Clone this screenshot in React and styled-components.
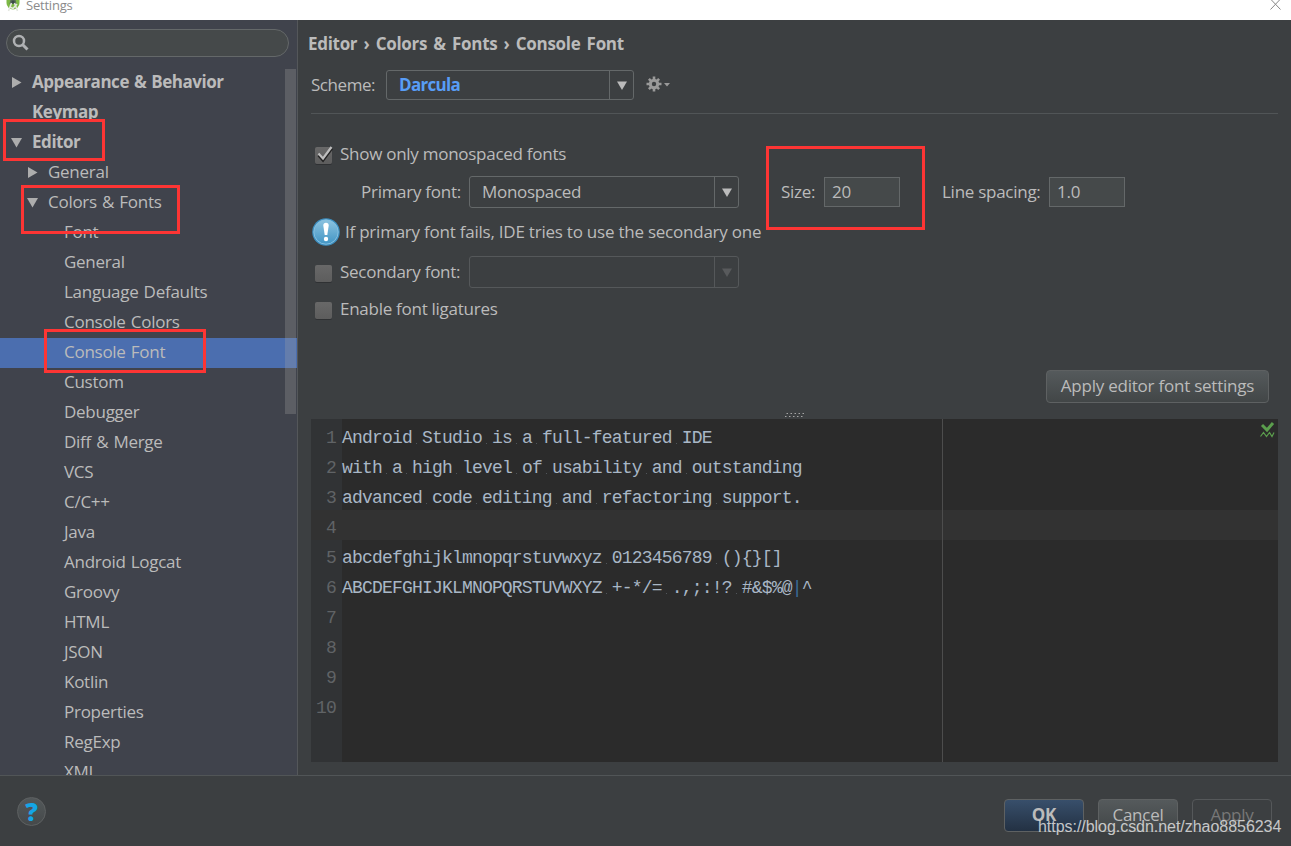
import { Fragment } from "react"
import styled, { createGlobalStyle } from 'styled-components'

const GlobalStyle = createGlobalStyle`
    *{
        box-sizing:border-box;
    }
    body{
        margin:0;
        overflow:hidden;
        background:#3c3f41;
    }
    input,button{
        font:inherit;
        letter-spacing:inherit;
        margin:0;
    }
`;

const Window = styled.div`
    position:relative;
    display:flex;
    flex-direction:column;
    width:1291px;
    height:846px;
    overflow:hidden;
    background:#3c3f41;
    color:#bbbbbb;
    font-family:'Open Sans','Noto Sans',sans-serif;
    font-size:17px;
    letter-spacing:-.23px;
    white-space:nowrap;
`;

const TitleBar = styled.header`
    display:flex;
    flex:none;
    justify-content:space-between;
    height:20px;
    padding:0 10px 0 6px;
    background:#fff;
    color:#8b8b8b;
    font-size:13px;
    line-height:10px;
    letter-spacing:-.22px;
`;

const TitleGroup = styled.div`
    display:flex;
    gap:5px;
`;

const Body = styled.div`
    display:flex;
    height:755px;
`;

const Sidebar = styled.aside`
    position:relative;
    width:298px;
    flex:none;
    overflow:hidden;
    border-right:1px solid #54575a;
    background:#40434c;
`;

const SearchBox = styled.div`
    display:flex;
    align-items:center;
    width:283px;
    height:28px;
    margin:9px 0 11px 6px;
    padding-left:5px;
    border:1px solid #646869;
    border-radius:14px;
    background:#45494a;
`;

const TreeRow = styled.div`
    display:flex;
    align-items:center;
    height:30px;
    padding:0 0 4px ${({$level}) => 11 + $level * 16}px;
    background:${({$selected}) => $selected ? '#4b6eaf' : 'transparent'};
    font-weight:${({$bold}) => $bold ? 700 : 400};
    letter-spacing:${({$bold}) => $bold ? '-.45px' : '-.27px'};
    word-spacing:1px;
`;

const TreeArrow = styled.span`
    display:flex;
    align-items:center;
    width:21px;
    flex:none;
    margin-top:3px;
`;

const Scrollbar = styled.div`
    position:absolute;
    top:49px;
    right:1px;
    width:11px;
    height:345px;
    background:rgba(166,166,166,.28);
`;

const Main = styled.main`
    display:flex;
    flex-direction:column;
    width:980px;
    padding:9px 0 0 13px;
`;

const Breadcrumb = styled.h1`
    height:30px;
    margin:0 0 0 -3px;
    font-size:17px;
    line-height:30px;
    letter-spacing:-.3px;
    word-spacing:2.1px;
`;

const SchemeRow = styled.div`
    display:flex;
    align-items:center;
    width:967px;
    height:55px;
    padding-bottom:2px;
    border-bottom:1px solid #515557;
`;

const SchemeLabel = styled.span`
    width:75px;
    flex:none;
    padding-bottom:2px;
    letter-spacing:-.45px;
`;

const Combo = styled.div`
    display:flex;
    flex:none;
    width:${({$width}) => $width}px;
    height:${({$height}) => $height}px;
    border:1px solid ${({$disabled}) => $disabled ? '#55585a' : '#646869'};
    border-radius:3px;
`;

const ComboValue = styled.span`
    display:flex;
    align-items:center;
    flex:1;
    padding:0 0 2px 12px;
    color:${({$accent}) => $accent ? '#589df6' : '#bbbbbb'};
    font-weight:${({$accent}) => $accent ? 700 : 400};
    letter-spacing:${({$accent}) => $accent ? '-.7px' : '-.32px'};
`;

const ComboArrow = styled.span`
    display:flex;
    align-items:center;
    justify-content:center;
    width:24px;
    border-left:1px solid ${({$disabled}) => $disabled ? '#55585a' : '#646869'};
`;

const Form = styled.section`
    display:flex;
    flex-direction:column;
    height:256px;
    padding-top:20px;
`;

const FormRow = styled.div`
    display:flex;
    align-items:center;
    height:${({$height}) => $height}px;
    padding-left:${({$indent}) => $indent || 0}px;
`;

const FieldLabel = styled.label`
    width:${({$width}) => $width ? $width + 'px' : 'auto'};
    flex:none;
    padding-bottom:2px;
    letter-spacing:-.27px;
`;

const Hint = styled.span`
    padding:0 0 2px 5px;
    letter-spacing:-.23px;
`;

const CheckBox = styled.span`
    display:block;
    width:17px;
    height:17px;
    flex:none;
    margin:2px 8px 0 0;
    border-radius:2px;
    background:linear-gradient(#686868,#5d5d5d);
    box-shadow:0 1px 0 #2f3133;
`;

const NumberField = styled.input`
    width:76px;
    height:30px;
    padding:0 0 2px 7px;
    border:1px solid #646869;
    border-radius:0;
    outline:none;
    background:#45494a;
    color:#bbbbbb;
`;

const ApplyRow = styled.div`
    display:flex;
    justify-content:flex-end;
    height:49px;
    padding-right:9px;
`;

const Button = styled.button`
    width:${({$width}) => $width || 80}px;
    height:33px;
    padding:0 0 2px;
    border:1px solid ${({$disabled}) => $disabled ? '#55585a' : '#5e6162'};
    border-radius:4px;
    background:${({$primary, $disabled}) => $primary
        ? 'linear-gradient(#384f6b,#233143)'
        : $disabled ? 'transparent' : 'linear-gradient(#555a5c,#424647)'};
    color:${({$disabled}) => $disabled ? '#777777' : '#bbbbbb'};
    font-weight:${({$primary}) => $primary ? 700 : 400};
`;

const Editor = styled.section`
    position:relative;
    display:flex;
    flex-direction:column;
    width:967px;
    height:343px;
    padding-top:1px;
    background:linear-gradient(90deg,#313335 31px,#2b2b2b 31px);
    color:#a9b7c6;
    font-family:'Liberation Mono',monospace;
    font-size:18px;
    letter-spacing:-.81px;
`;

const CodeLine = styled.div`
    display:flex;
    height:30px;
    line-height:37px;
    background:${({$current}) => $current ? '#323232' : 'transparent'};
`;

const LineNumber = styled.span`
    width:31px;
    flex:none;
    padding-right:6px;
    color:#606366;
    text-align:right;
`;

const Code = styled.span`
    white-space:pre;
`;

// blank with a faint dot, like the editor's "show whitespaces"
const Space = styled.span`
    display:inline-block;
    height:30px;
    vertical-align:top;
    background:linear-gradient(#50555a,#50555a) 4px 23px / 1px 1px no-repeat;
`;

const Pipe = styled.span`
    color:#3a6d98;
`;

const MarginLine = styled.div`
    position:absolute;
    top:0;
    bottom:0;
    left:631px;
    width:1px;
    background:#4d4d4d;
`;

const Inspection = styled.svg`
    position:absolute;
    top:3px;
    right:3px;
`;

const Grip = styled.svg`
    position:absolute;
    top:-7px;
    left:474px;
`;

const Footer = styled.footer`
    display:flex;
    align-items:flex-start;
    justify-content:space-between;
    height:71px;
    padding:21px 19px 0 17px;
    border-top:1px solid #515557;
`;

const Buttons = styled.div`
    display:flex;
    gap:14px;
    margin-top:2px;
`;

const HelpButton = styled.button`
    width:29px;
    height:29px;
    padding:0;
    border:1px solid #5e6162;
    border-radius:50%;
    background:linear-gradient(#53585a,#45494a);
    color:#14a5e6;
    font-size:25px;
    font-weight:800;
    line-height:25px;
`;

const Watermark = styled.div`
    position:absolute;
    left:1038px;
    top:817px;
    color:rgba(225,225,225,.85);
    font-family:'Liberation Sans',sans-serif;
    font-size:16px;
    line-height:20px;
    letter-spacing:-.04px;
`;

const Highlight = styled.div`
    position:absolute;
    left:${({$x}) => $x}px;
    top:${({$y}) => $y}px;
    width:${({$w}) => $w}px;
    height:${({$h}) => $h}px;
    border:3px solid #fd3534;
`;

const tree = [
    { label: 'Appearance & Behavior', level: 0, bold: true, arrow: 'right' },
    { label: 'Keymap', level: 0, bold: true },
    { label: 'Editor', level: 0, bold: true, arrow: 'down' },
    { label: 'General', level: 1, arrow: 'right' },
    { label: 'Colors & Fonts', level: 1, arrow: 'down' },
    ...[
        'Font', 'General', 'Language Defaults', 'Console Colors', 'Console Font', 'Custom',
        'Debugger', 'Diff & Merge', 'VCS', 'C/C++', 'Java', 'Android Logcat', 'Groovy',
        'HTML', 'JSON', 'Kotlin', 'Properties', 'RegExp', 'XML',
    ].map(label => ({ label, level: 2, selected: label === 'Console Font' })),
]

const lines = [
    'Android Studio is a full-featured IDE',
    'with a high level of usability and outstanding',
    'advanced code editing and refactoring support.',
    '',
    'abcdefghijklmnopqrstuvwxyz 0123456789 (){}[]',
    'ABCDEFGHIJKLMNOPQRSTUVWXYZ +-*/= .,;:!? #&$%@|^',
    '', '', '', '',
]

const highlights = [
    { x: 3, y: 119, w: 102, h: 42 },
    { x: 21, y: 185, w: 159, h: 49 },
    { x: 44, y: 329, w: 162, h: 44 },
    { x: 766, y: 146, w: 159, h: 84 },
]

function Triangle({direction = 'down', color = '#adadad'}){
    return (
        <svg width="11" height="11" viewBox="0 0 11 11">
            <path d={direction === 'down' ? 'M0 1h11L5.5 10.5z' : 'M1 0v11L10.500 5.500z'} fill={color}/>
        </svg>
    )
}

function Select({value, width, height, accent, disabled}){
    return (
        <Combo $width={width} $height={height} $disabled={disabled}>
            <ComboValue $accent={accent}>{value}</ComboValue>
            <ComboArrow $disabled={disabled}>
                <svg width="10" height="9" viewBox="0 0 10 9">
                    <path d="M0 .5h10L5 9z" fill={disabled ? '#585a5c' : '#bbbbbb'}/>
                </svg>
            </ComboArrow>
        </Combo>
    )
}

const CheckMark = styled.svg`
    display:block;
    overflow:visible;
`;

function Check({checked}){
    return (
        <CheckBox>
            {checked && (
                <CheckMark width="19" height="17" viewBox="0 0 19 17">
                    <path d="M3.500 8.500l4.500 5L17 1.500" fill="none" stroke="#222" strokeWidth="2.4"/>
                    <path d="M3.500 6.500l4.500 5L16.500 0" fill="none" stroke="#bdbdbd" strokeWidth="2.2"/>
                </CheckMark>
            )}
        </CheckBox>
    )
}

const GearIcon = styled.svg`
    margin:0 0 2px 12px;
`;

function Gear(){
    return (
        <GearIcon width="26" height="16" viewBox="0 0 26 16">
            <path d="M8 .5v15M.5 8h15M2.900 2.900l10.200 10.200M13.100 2.900L2.900 13.100" stroke="#9a9a9a" strokeWidth="2.600"/>
            <circle cx="8" cy="8" r="5.2" fill="#9a9a9a"/>
            <circle cx="8" cy="8" r="2.2" fill="#3c3f41"/>
            <path d="M18 7h6l-3 3.500z" fill="#9a9a9a"/>
        </GearIcon>
    )
}

function InfoIcon(){
    return (
        <svg width="28" height="28" viewBox="0 0 28 28">
            <defs>
                <linearGradient id="info" x1="0" y1="0" x2="0" y2="1">
                    <stop offset="0" stopColor="#8cc3e0"/>
                    <stop offset="1" stopColor="#4295c4"/>
                </linearGradient>
            </defs>
            <circle cx="14" cy="14" r="13.8" fill="#3d8fc0"/>
            <circle cx="14" cy="14" r="12.2" fill="url(#info)" stroke="#86bfdf" strokeWidth="1"/>
            <path d="M11.300 7.500a2.700 2.700 0 0 1 5.400 0L15.300 17h-2.600z" fill="#fff"/>
            <circle cx="14" cy="21" r="2.2" fill="#fff"/>
        </svg>
    )
}

function CodeText({text}){
    return text.split(' ').map((word, i) => (
        <Fragment key={i}>
            {i > 0 && <Space> </Space>}
            {word.split('|').map((part, j) => (
                <Fragment key={j}>
                    {j > 0 && <Pipe>|</Pipe>}
                    {part}
                </Fragment>
            ))}
        </Fragment>
    ))
}

export default function App(){
    return (
        <>
        <GlobalStyle />
        <Window>
            <TitleBar>
                <TitleGroup>
                    <svg width="15" height="12" viewBox="0 0 15 12">
                        <path d="M.5 0h13v3a6.500 6.500 0 0 1-13 0z" fill="#7cb845"/>
                        <path d="M4.500 0h5l1 4h-7z" fill="#55675a"/>
                        <path d="M5.500 3l-3 8M8.500 3l3 8M4 7l3 1.500L11 4" fill="none" stroke="#e4e8e0" strokeWidth="1.6"/>
                        <circle cx="7" cy="2" r="1.5" fill="#394b45"/>
                    </svg>
                    <span>Settings</span>
                </TitleGroup>
                <svg width="11" height="11" viewBox="0 0 11 11">
                    <path d="M.5-1l10 10.500M10.500-1L.5 9.500" stroke="#888" strokeWidth="1"/>
                </svg>
            </TitleBar>
            <Body>
                <Sidebar>
                    <SearchBox>
                        <svg width="18" height="18" viewBox="0 0 18 18">
                            <circle cx="7" cy="7" r="5" fill="none" stroke="#afb1b3" strokeWidth="2.5"/>
                            <path d="M10.500 10.500l5 5" stroke="#afb1b3" strokeWidth="3"/>
                        </svg>
                    </SearchBox>
                    {tree.map(({label, level, bold, arrow, selected}, i) => (
                        <TreeRow key={i} $level={level} $bold={bold} $selected={selected}>
                            <TreeArrow>{arrow && <Triangle direction={arrow}/>}</TreeArrow>
                            {label}
                        </TreeRow>
                    ))}
                    <Scrollbar />
                </Sidebar>
                <Main>
                    <Breadcrumb>Editor › Colors &amp; Fonts › Console Font</Breadcrumb>
                    <SchemeRow>
                        <SchemeLabel>Scheme:</SchemeLabel>
                        <Select value="Darcula" width={248} height={30} accent />
                        <Gear />
                    </SchemeRow>
                    <Form>
                        <FormRow $height={41} $indent={4}>
                            <Check checked />
                            <FieldLabel>Show only monospaced fonts</FieldLabel>
                        </FormRow>
                        <FormRow $height={34} $indent={50}>
                            <FieldLabel $width={108}>Primary font:</FieldLabel>
                            <Select value="Monospaced" width={270} height={32} />
                            <FormRow $height={32} $indent={42}>
                                <FieldLabel $width={43}>Size:</FieldLabel>
                                <NumberField defaultValue="20" />
                            </FormRow>
                            <FormRow $height={32} $indent={42}>
                                <FieldLabel $width={107}>Line spacing:</FieldLabel>
                                <NumberField defaultValue="1.0" />
                            </FormRow>
                        </FormRow>
                        <FormRow $height={46} $indent={1}>
                            <InfoIcon />
                            <Hint>If primary font fails, IDE tries to use the secondary one</Hint>
                        </FormRow>
                        <FormRow $height={34} $indent={4}>
                            <Check />
                            <FieldLabel $width={129}>Secondary font:</FieldLabel>
                            <Select value="" width={270} height={32} disabled />
                        </FormRow>
                        <FormRow $height={40} $indent={4}>
                            <Check />
                            <FieldLabel>Enable font ligatures</FieldLabel>
                        </FormRow>
                    </Form>
                    <ApplyRow>
                        <Button $width={223}>Apply editor font settings</Button>
                    </ApplyRow>
                    <Editor>
                        <Grip width="20" height="6" viewBox="0 0 20 6">
                            {[0, 4, 8, 12, 16].map(x => (
                                <path key={x} d={`M${x} 4.500h1.500M${x + 1.5} 1.500h1.500`} stroke="#a5a5a5"/>
                            ))}
                        </Grip>
                        {lines.map((text, i) => (
                            <CodeLine key={i} $current={i === 3}>
                                <LineNumber>{i + 1}</LineNumber>
                                <Code><CodeText text={text}/></Code>
                            </CodeLine>
                        ))}
                        <MarginLine />
                        <Inspection width="15" height="16" viewBox="0 0 15 16">
                            <path d="M2 3l5 5 6-7" fill="none" stroke="#5b9e4d" strokeWidth="3"/>
                            <path d="M.5 14.500l3-4 3 4 3-4 2.500 4 2-4" fill="none" stroke="#5b9e4d" strokeWidth="1.200"/>
                        </Inspection>
                    </Editor>
                </Main>
            </Body>
            <Footer>
                <HelpButton>?</HelpButton>
                <Buttons>
                    <Button $primary>OK</Button>
                    <Button>Cancel</Button>
                    <Button $disabled>Apply</Button>
                </Buttons>
            </Footer>
            {highlights.map(({x, y, w, h}) => (
                <Highlight key={y} $x={x} $y={y} $w={w} $h={h}/>
            ))}
            <Watermark>https://blog.csdn.net/zhao8856234</Watermark>
        </Window>
        </>
    )
}
